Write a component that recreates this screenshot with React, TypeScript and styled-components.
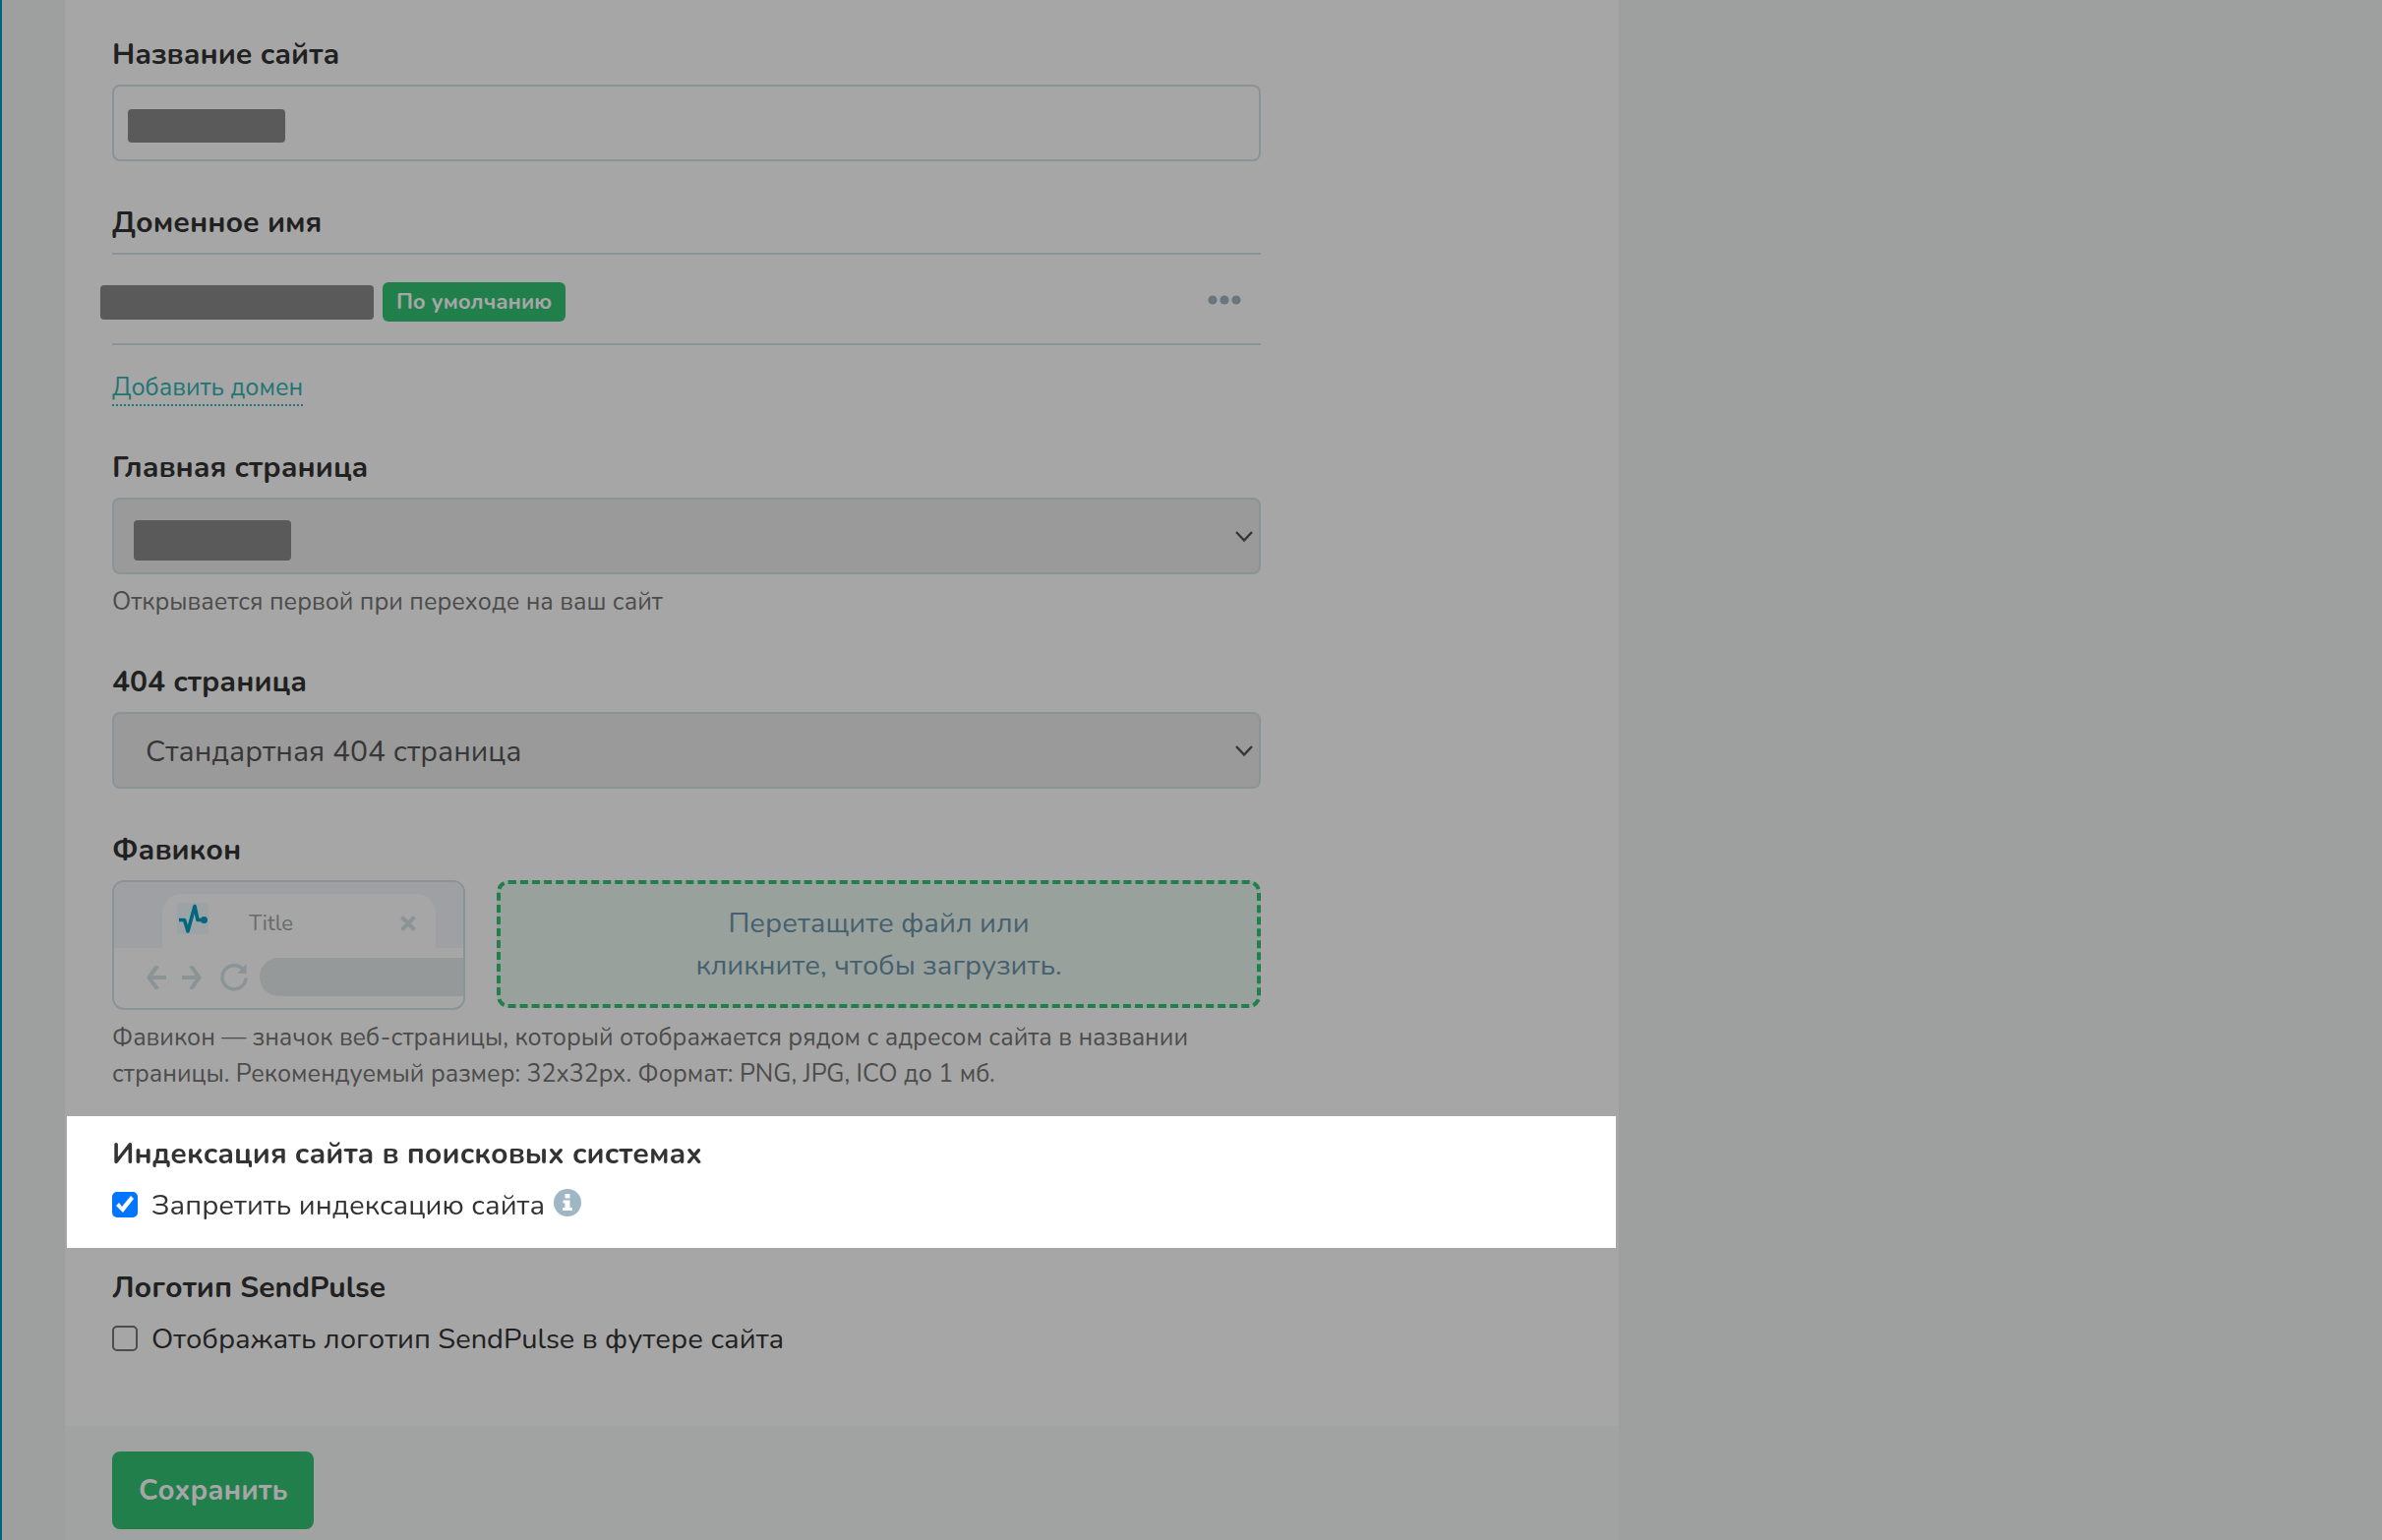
import React from 'react';
import styled, { createGlobalStyle, css } from 'styled-components';

const color = {
  text: '#333333',
  muted: '#757575',
  line: '#d4e4e6',
  green: '#33c375',
  link: '#33b4b2',
  steel: '#9fb6c4',
  redacted: '#8a8a8a',
  accent: '#0098c5',
};

const GlobalStyle = createGlobalStyle`
  *, *::before, *::after { box-sizing: border-box; }
  body {
    margin: 0;
    color: ${color.text};
    background: #f3f6f5;
    font-family: Nunito, 'Open Sans', 'Noto Sans', sans-serif;
    font-size: 29px;
    line-height: 40px;
  }
  button, input, select { font: inherit; color: inherit; }
`;

const Page = styled.main`
  display: flex;
  min-height: 100vh;
  padding-left: 66px;
  overflow: hidden;
  box-shadow: inset 2px 0 0 ${color.accent};
`;

const Panel = styled.form`
  display: flex;
  flex: 1;
  flex-direction: column;
  max-width: 1580px;
  background: #ffffff;
`;

const Fields = styled.div`
  display: flex;
  flex-direction: column;
  gap: 43px;
  padding: 36px 48px 24px;
`;

const Field = styled.div`
  display: flex;
  flex-direction: column;
  align-items: flex-start;
  width: 100%;
  max-width: 1168px;
`;

const titleStyle = css`
  display: block;
  margin: 0 0 10px;
  padding: 0;
  font-size: 30px;
  font-weight: 700;
  line-height: 40px;
`;

const Label = styled.label`
  ${titleStyle}
`;

const Title = styled.h2`
  ${titleStyle}
`;

const Control = styled.div`
  position: relative;
  width: 100%;
`;

const boxStyle = css`
  display: block;
  width: 100%;
  height: 78px;
  border: 2px solid ${color.line};
  border-radius: 8px;
`;

const TextInput = styled.input`
  ${boxStyle}
  padding: 0 32px;
  background: #ffffff;
`;

const Select = styled.select`
  ${boxStyle}
  padding: 3px 60px 0 32px;
  appearance: none;
  color: #555555;
  background: #ededed;
  font-size: 30px;
`;

const Chevron = styled.svg`
  position: absolute;
  top: 32px;
  right: 7px;
  pointer-events: none;
`;

const Redacted = styled.span<{ $width: number; $height: number }>`
  display: block;
  flex: none;
  width: ${(p) => p.$width}px;
  height: ${(p) => p.$height}px;
  border-radius: 4px;
  background: ${color.redacted};
`;

const RedactedValue = styled(Redacted)<{ $top: number; $left: number }>`
  position: absolute;
  top: ${(p) => p.$top}px;
  left: ${(p) => p.$left}px;
`;

const Help = styled.p`
  margin: 10px 0 0;
  color: ${color.muted};
  font-size: 25px;
  line-height: 37px;
`;

const DomainRow = styled.div`
  display: flex;
  align-items: center;
  gap: 9px;
  width: 100%;
  height: 94px;
  padding-top: 6px;
  border: solid ${color.line};
  border-width: 2px 0;
`;

const DomainName = styled(Redacted)`
  margin-left: -12px;
`;

const Badge = styled.span`
  padding: 0 14px;
  border-radius: 6px;
  color: #ffffff;
  background: ${color.green};
  font-size: 22px;
  font-weight: 700;
  line-height: 40px;
`;

const MoreButton = styled.button`
  display: flex;
  margin: 0 8px 0 auto;
  padding: 12px;
  border: 0;
  background: none;
`;

const AddLink = styled.a`
  margin-top: 27px;
  border-bottom: 2px dotted ${color.link};
  color: ${color.link};
  font-size: 25px;
  line-height: 33px;
  text-decoration: none;
`;

const FaviconRow = styled.div`
  display: flex;
  align-items: flex-start;
  gap: 32px;
  width: 100%;
`;

const Preview = styled.div`
  flex: none;
  width: 359px;
  height: 132px;
  overflow: hidden;
  border: 2px solid ${color.line};
  border-radius: 12px;
`;

const TabStrip = styled.div`
  height: 67px;
  padding: 12px 28px 0 49px;
  background: #f3f6fa;
`;

const Tab = styled.div`
  display: flex;
  align-items: center;
  height: 55px;
  padding: 4px 20px 0 15px;
  border-radius: 20px 20px 0 0;
  background: #ffffff;
`;

const PulseLogo = styled.svg`
  margin-bottom: 10px;
`;

const TabTitle = styled.span`
  flex: 1;
  margin-left: 41px;
  color: #a3a3a3;
  font-size: 22px;
  line-height: 32px;
`;

const Toolbar = styled.div`
  display: flex;
  align-items: center;
  height: 59px;
  padding-left: 33px;
`;

const Arrow = styled.svg`
  margin-right: 16px;
`;

const Address = styled.div`
  flex: 1;
  height: 39px;
  margin-left: 12px;
  border-radius: 20px 0 0 20px;
  background: #e5ebed;
`;

const DropZone = styled.label`
  position: relative;
  display: flex;
  flex: 1;
  align-items: center;
  justify-content: center;
  height: 130px;
  border: 4px dashed ${color.green};
  border-radius: 12px;
  color: #6c94a9;
  background: #ebf8f2;
  line-height: 43px;
  text-align: center;
`;

const FileInput = styled.input`
  position: absolute;
  inset: 0;
  width: 100%;
  opacity: 0;
`;

const Group = styled.section`
  padding: 21px 48px 68px;
`;

/* The lit section: its shadow darkens everything else on the page. */
const Spotlight = styled.section`
  position: relative;
  z-index: 1;
  margin: 0 3px 0 2px;
  padding: 19px 46px 23px;
  box-shadow: 0 0 0 4000px rgba(0, 0, 0, 0.35);
`;

const CheckRow = styled.div`
  display: flex;
  align-items: center;
  height: 42px;
`;

const Checkbox = styled.input`
  width: 26px;
  height: 26px;
  margin: 0 14px 0 0;
  appearance: none;
  border: 2px solid #767676;
  border-radius: 5px;

  &:checked {
    border: 0;
    background: #0075ff;
  }

  &:checked::after {
    display: block;
    width: 26px;
    height: 26px;
    background: #ffffff;
    clip-path: polygon(4px 14px, 7px 11px, 10px 15px, 19px 4px, 22px 7px, 11px 21px);
    content: '';
  }
`;

const CheckLabel = styled.label`
  padding-top: 2px;
`;

const InfoIcon = styled.svg`
  margin: 0 0 4px 9px;
`;

const Footer = styled.footer`
  flex: 1;
  padding: 26px 48px 11px;
  background: #f8fbf9;
`;

const SaveButton = styled.button`
  height: 79px;
  padding: 0 27px;
  border: 0;
  border-radius: 8px;
  color: #ffffff;
  background: ${color.green};
  font-weight: 700;
`;

const ChevronDown = () => (
  <Chevron width="20" height="16" viewBox="0 0 20 16" fill="none" aria-hidden="true">
    <path d="M2 3l8 8.500 8-8.500" stroke="#555555" strokeWidth="2.4" />
  </Chevron>
);

export default function App() {
  return (
    <>
      <GlobalStyle />
      <Page>
        <Panel onSubmit={(e) => e.preventDefault()}>
          <Fields>
            <Field>
              <Label htmlFor="site-name">Название сайта</Label>
              <Control>
                <TextInput id="site-name" type="text" />
                <RedactedValue $width={160} $height={34} $top={25} $left={16} />
              </Control>
            </Field>

            <Field>
              <Title>Доменное имя</Title>
              <DomainRow>
                <DomainName $width={278} $height={35} />
                <Badge>По умолчанию</Badge>
                <MoreButton type="button" aria-label="Действия">
                  <svg width="34" height="16" viewBox="0 0 34 16" fill={color.steel}>
                    <circle cx="5" cy="6" r="4.6" />
                    <circle cx="17" cy="6" r="4.6" />
                    <circle cx="29" cy="6" r="4.6" />
                  </svg>
                </MoreButton>
              </DomainRow>
              <AddLink href="#domain">Добавить домен</AddLink>
            </Field>

            <Field>
              <Label htmlFor="home-page">Главная страница</Label>
              <Control>
                <Select id="home-page">
                  <option value="" />
                </Select>
                <RedactedValue $width={160} $height={41} $top={23} $left={22} />
                <ChevronDown />
              </Control>
              <Help>Открывается первой при переходе на ваш сайт</Help>
            </Field>

            <Field>
              <Label htmlFor="not-found-page">404 страница</Label>
              <Control>
                <Select id="not-found-page">
                  <option>Стандартная 404 страница</option>
                </Select>
                <ChevronDown />
              </Control>
            </Field>

            <Field>
              <Title>Фавикон</Title>
              <FaviconRow>
                <Preview>
                  <TabStrip>
                    <Tab>
                      <PulseLogo width="32" height="32" viewBox="0 0 32 32" fill="none" aria-hidden="true">
                        <rect width="32" height="32" rx="3" fill="#f0fbff" />
                        <path
                          d="M2 17.500h5.500l3.500 11.500L18 3.500l3 14h6"
                          stroke="#009fc1"
                          strokeWidth="3.6"
                          strokeLinejoin="round"
                        />
                        <circle cx="27.500" cy="17.500" r="3.500" fill="#009fc1" />
                      </PulseLogo>
                      <TabTitle>Title</TabTitle>
                      <svg width="16" height="16" viewBox="0 0 16 16" fill="none" aria-hidden="true">
                        <path d="M1.500 1.500l13 13M14.500 1.500l-13 13" stroke={color.line} strokeWidth="4" />
                      </svg>
                    </Tab>
                  </TabStrip>
                  <Toolbar>
                    <Arrow width="20" height="24" viewBox="0 0 20 24" fill="none" aria-hidden="true">
                      <path d="M11 0L2.500 12l8.500 12M2 12h18" stroke={color.line} strokeWidth="4" />
                    </Arrow>
                    <Arrow width="20" height="24" viewBox="0 0 20 24" fill="none" aria-hidden="true">
                      <path d="M9 0l8.500 12L9 24M18 12H0" stroke={color.line} strokeWidth="4" />
                    </Arrow>
                    <svg width="31" height="28" viewBox="-3 0 31 28" fill="none" aria-hidden="true">
                      <path
                        d="M23.500 6.500A12 12 0 1 0 26 14.500"
                        stroke={color.line}
                        strokeWidth="3.5"
                      />
                      <path d="M26.500 0v10H17z" fill={color.line} />
                    </svg>
                    <Address />
                  </Toolbar>
                </Preview>
                <DropZone>
                  <FileInput type="file" accept=".png,.jpg,.ico" />
                  <span>
                    Перетащите файл или
                    <br />
                    кликните, чтобы загрузить.
                  </span>
                </DropZone>
              </FaviconRow>
              <Help>
                Фавикон — значок веб-страницы, который отображается рядом с адресом сайта в названии
                страницы. Рекомендуемый размер: 32x32px. Формат: PNG, JPG, ICO до 1 мб.
              </Help>
            </Field>
          </Fields>

          <Spotlight>
            <Title>Индексация сайта в поисковых системах</Title>
            <CheckRow>
              <Checkbox id="no-index" type="checkbox" defaultChecked />
              <CheckLabel htmlFor="no-index">Запретить индексацию сайта</CheckLabel>
              <InfoIcon width="28" height="28" viewBox="0 0 28 28" aria-hidden="true">
                <circle cx="14" cy="14" r="14" fill={color.steel} />
                <path
                  d="M11.500 5h5v4.500h-5zM9.500 11.500h7v7.500h2.500v3h-10v-3h2.500v-4.500h-2z"
                  fill="#ffffff"
                />
              </InfoIcon>
            </CheckRow>
          </Spotlight>

          <Group>
            <Title>Логотип SendPulse</Title>
            <CheckRow>
              <Checkbox id="show-logo" type="checkbox" />
              <CheckLabel htmlFor="show-logo">Отображать логотип SendPulse в футере сайта</CheckLabel>
            </CheckRow>
          </Group>

          <Footer>
            <SaveButton type="submit">Сохранить</SaveButton>
          </Footer>
        </Panel>
      </Page>
    </>
  );
}
